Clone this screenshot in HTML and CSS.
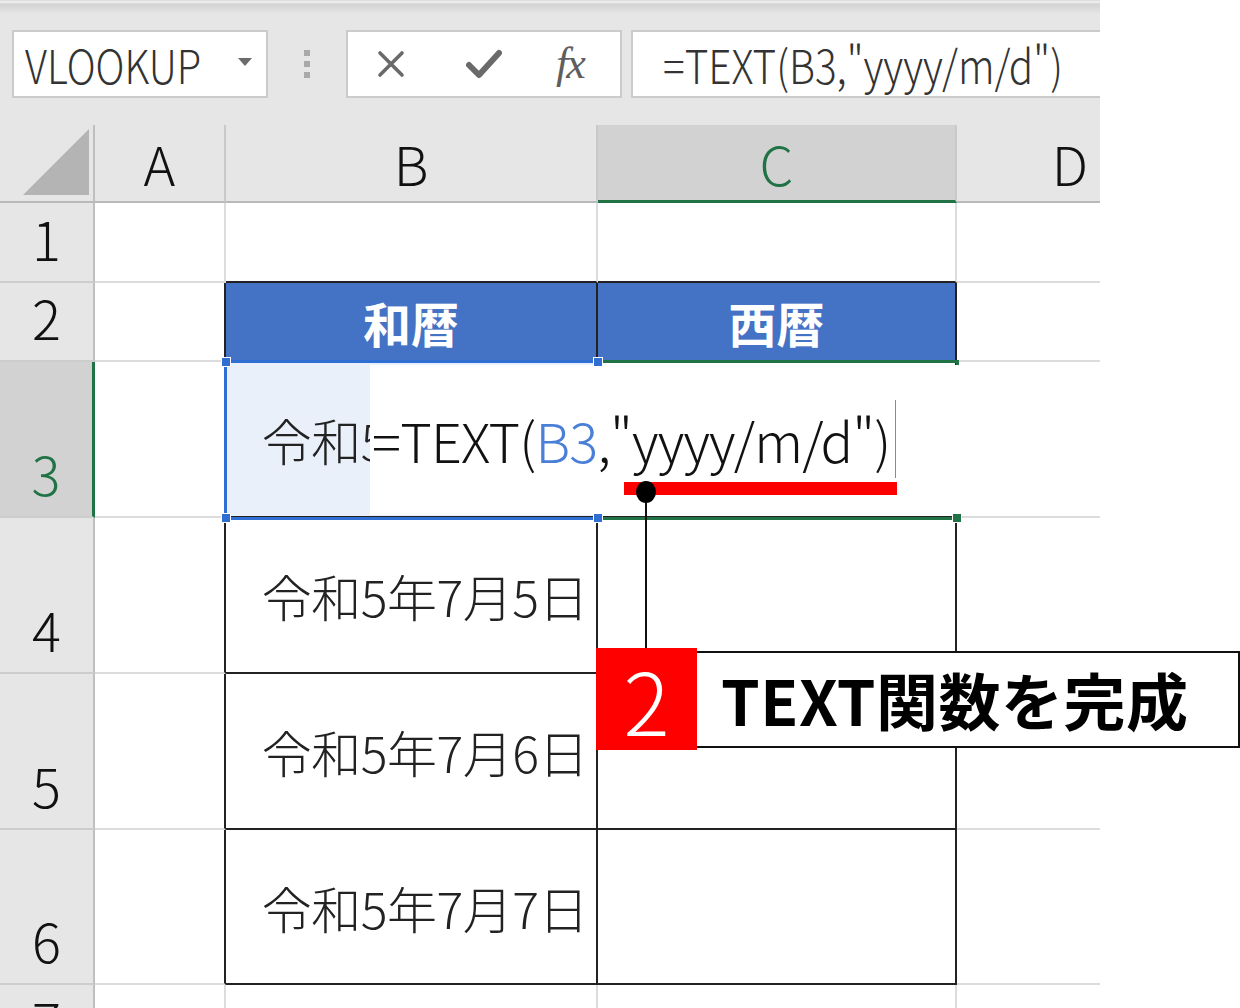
FILE: index.html
```html
<!DOCTYPE html>
<html lang="ja">

<head>
  <meta charset="UTF-8">
  <meta name="viewport" content="width=device-width, initial-scale=1.0">
  <title>TEXT関数</title>
  <link rel="stylesheet" href="styles.css">
</head>

<body>
  <div class="page">
    <div class="sheet">
      <div class="ribbon-edge"></div>
      <div class="formula-bar">
        <div class="name-box">
          <span class="narrow">VLOOKUP</span>
          <svg class="drop" width="14" height="8" viewBox="0 0 14 8"><path d="M0 0 H14 L7 8 Z" fill="#6b6b6b"/></svg>
        </div>
        <div class="grip"><i></i><i></i><i></i></div>
        <div class="fx-buttons">
          <svg class="btn-x" width="32" height="32" viewBox="0 0 32 32"><path d="M5 5 L27 27 M27 5 L5 27" stroke="#6a6a6a" stroke-width="3.6" stroke-linecap="round"/></svg>
          <svg class="btn-ok" width="36" height="30" viewBox="0 0 36 30"><path d="M3 16 L13 26 L33 4" stroke="#6a6a6a" stroke-width="6" fill="none" stroke-linecap="round" stroke-linejoin="round"/></svg>
          <span class="fx">fx</span>
        </div>
        <div class="formula-input"><span class="narrow">=TEXT(B3,"yyyy/m/d")</span></div>
      </div>

      <div class="grid">
        <!-- 列見出し -->
        <div class="corner">
          <svg width="66" height="66" viewBox="0 0 66 66"><path d="M66 0 V66 H0 Z" fill="#b4b4b4"/></svg>
        </div>
        <div class="ch">A</div>
        <div class="ch">B</div>
        <div class="ch sel">C</div>
        <div class="ch last">D</div>

        <!-- 1 -->
        <div class="rh">1</div>
        <div class="cell"></div>
        <div class="cell above"></div>
        <div class="cell above"></div>
        <div class="cell last"></div>

        <!-- 2 -->
        <div class="rh">2</div>
        <div class="cell left-of"></div>
        <div class="cell t head">和暦</div>
        <div class="cell t head">西暦</div>
        <div class="cell last"></div>

        <!-- 3 -->
        <div class="rh sel">3</div>
        <div class="cell left-of"></div>
        <div class="cell t date ref">令和5年7月4日</div>
        <div class="cell t"></div>
        <div class="cell last"></div>

        <!-- 4 -->
        <div class="rh">4</div>
        <div class="cell left-of"></div>
        <div class="cell t date">令和5年7月5日</div>
        <div class="cell t"></div>
        <div class="cell last"></div>

        <!-- 5 -->
        <div class="rh">5</div>
        <div class="cell left-of"></div>
        <div class="cell t date">令和5年7月6日</div>
        <div class="cell t"></div>
        <div class="cell last"></div>

        <!-- 6 -->
        <div class="rh">6</div>
        <div class="cell left-of"></div>
        <div class="cell t date">令和5年7月7日</div>
        <div class="cell t"></div>
        <div class="cell last"></div>

        <!-- 7 -->
        <div class="rh">7</div>
        <div class="cell"></div>
        <div class="cell"></div>
        <div class="cell"></div>
        <div class="cell last"></div>

        <!-- 選択枠と編集中の数式 -->
        <div class="range-sel"></div>
        <div class="active-sel"></div>
        <div class="edit-box">
          <span>=TEXT(<b class="ref-txt">B3</b>,"yyyy/m/d")</span>
          <i class="caret"></i>
        </div>
        <i class="handle h1"></i>
        <i class="handle h2"></i>
        <i class="handle h3"></i>
        <i class="handle h4"></i>
        <i class="handle fill"></i>

        <div class="underline"></div>
        <div class="pin-line"></div>
        <div class="pin-dot"></div>

        <div class="callout">
          <div class="num">2</div>
          <div class="label">TEXT関数を完成</div>
        </div>
      </div>
    </div>
  </div>
</body>

</html>
```

FILE: styles.css
```css
* {
  margin: 0;
  padding: 0;
  box-sizing: border-box;
}
body {
  background: #fff;
  overflow: hidden;
  font-family: "Noto Sans CJK JP", "Noto Sans", sans-serif;
  color: #222;
}
.page {
  width: 1240px;
  height: 1008px;
  overflow: hidden;
}
.sheet {
  width: 1100px;
}

/* 数式バー */
.ribbon-edge {
  height: 14px;
  background: linear-gradient(#d6d6d6 0, #f3f3f3 2px, #d2d2d2 4px, #e6e6e6 14px);
}
.formula-bar {
  height: 111px;
  background: #e6e6e6;
  display: flex;
  align-items: flex-start;
  padding: 16px 0 0 12px;
}
.narrow {
  display: inline-block;
  transform-origin: left center;
  white-space: nowrap;
  line-height: 1;
}
.name-box {
  width: 256px;
  height: 68px;
  background: #fff;
  border: 2px solid #cbcbcb;
  display: flex;
  align-items: center;
  justify-content: space-between;
  padding: 0 14px 0 11px;
  overflow: hidden;
}
.name-box .narrow {
  font-size: 46px;
  font-weight: 300;
  color: #333;
  transform: scaleX(0.865);
}
.drop {
  margin-bottom: 4px;
}
.grip {
  width: 78px;
  height: 68px;
  display: flex;
  flex-direction: column;
  align-items: center;
  justify-content: center;
  gap: 5px;
}
.grip i {
  width: 6px;
  height: 6px;
  background: #a9a9a9;
}
.fx-buttons {
  width: 276px;
  height: 68px;
  background: #fff;
  border: 2px solid #cbcbcb;
  display: flex;
  align-items: center;
  padding-left: 27px;
}
.btn-ok {
  margin-left: 59px;
}
.fx {
  margin-left: 54px;
  font-family: "Liberation Serif", serif;
  font-style: italic;
  font-size: 44px;
  line-height: 1;
  color: #5e5e5e;
  letter-spacing: -2px;
}
.formula-input {
  flex: 1;
  margin-left: 9px;
  height: 68px;
  background: #fff;
  border: 2px solid #cbcbcb;
  border-right: none;
  display: flex;
  align-items: center;
  padding-left: 30px;
  overflow: hidden;
}
.formula-input .narrow {
  font-size: 46px;
  font-weight: 300;
  color: #333;
  transform: scaleX(0.88);
}

/* シート */
.grid {
  position: relative;
  display: grid;
  grid-template-columns: 95px 131px 372px 359px 143px;
  grid-template-rows: 78px 80px 79px 156px 156px 156px 155px 80px;
  background: #fff;
}
.corner {
  background: #e6e6e6;
  border-right: 2px solid #bfbfbf;
  border-bottom: 2px solid #b9b9b9;
  display: flex;
  align-items: flex-end;
  justify-content: flex-end;
  padding: 0 4px 6px 0;
}
.ch {
  background: #e6e6e6;
  border-right: 2px solid #c9c9c9;
  border-bottom: 2px solid #b9b9b9;
  display: flex;
  align-items: center;
  justify-content: center;
  font-size: 54px;
  font-weight: 300;
  line-height: 1;
  color: #111;
}
.ch.sel {
  background: #d2d2d2;
  color: #217346;
  border-bottom: 3px solid #217346;
}
.ch.last {
  border-right: none;
  justify-content: flex-end;
  padding-right: 12px;
}
.rh {
  background: #e6e6e6;
  border-right: 2px solid #bfbfbf;
  border-bottom: 2px solid #cdcdcd;
  display: flex;
  align-items: flex-end;
  justify-content: center;
  padding-bottom: 16px;
  font-size: 54px;
  font-weight: 300;
  line-height: 1;
  color: #111;
}
.rh.sel {
  background: #d2d2d2;
  color: #217346;
  border-right: 3px solid #217346;
}
.cell {
  border-right: 2px solid #dcdcdc;
  border-bottom: 2px solid #dcdcdc;
}
.cell.last {
  border-right: none;
}
.cell.above {
  border-bottom-color: #222;
}
.cell.left-of {
  border-right-color: #222;
}
.cell.t {
  border-right-color: #222;
  border-bottom-color: #222;
}
.head {
  background: #4472c4;
  color: #fff;
  font-weight: bold;
  font-size: 48px;
  display: flex;
  align-items: center;
  justify-content: center;
  line-height: 1;
}
.date {
  display: flex;
  align-items: center;
  justify-content: flex-end;
  padding-right: 8px;
  font-size: 50px;
  font-weight: 300;
  letter-spacing: -0.5px;
  line-height: 1;
  color: #222;
  white-space: nowrap;
}
.ref {
  background: #eaf0fa;
}

/* 選択範囲 */
.range-sel {
  position: absolute;
  left: 224px;
  top: 235px;
  width: 376px;
  height: 160px;
  border: 3px solid #2f6fd3;
}
.active-sel {
  position: absolute;
  left: 598px;
  top: 235px;
  width: 361px;
  height: 160px;
  border: 3px solid #217346;
  border-left: none;
}
.edit-box {
  position: absolute;
  left: 370px;
  top: 240px;
  width: 592px;
  height: 150px;
  background: #fff;
  display: flex;
  align-items: center;
  padding-left: 2px;
  font-size: 54px;
  font-weight: 300;
  letter-spacing: -0.75px;
  line-height: 1;
  color: #111;
  white-space: nowrap;
}
.ref-txt {
  font-weight: 300;
  color: #4a7fd8;
}
.caret {
  position: absolute;
  left: 525px;
  top: 35px;
  width: 1px;
  height: 78px;
  background: #8a8a8a;
}
.handle {
  position: absolute;
  width: 10px;
  height: 10px;
  background: #2f6fd3;
  border: 1px solid #fff;
}
.h1 { left: 221px; top: 232px; }
.h2 { left: 593px; top: 232px; }
.h3 { left: 221px; top: 388px; }
.h4 { left: 593px; top: 388px; }
.handle.fill {
  left: 952px;
  top: 388px;
  background: #217346;
}

/* 注釈 */
.underline {
  position: absolute;
  left: 624px;
  top: 357px;
  width: 273px;
  height: 13px;
  background: #ff0000;
}
.pin-line {
  position: absolute;
  left: 645px;
  top: 367px;
  width: 2px;
  height: 158px;
  background: #111;
}
.pin-dot {
  position: absolute;
  left: 636px;
  top: 356px;
  width: 20px;
  height: 22px;
  border-radius: 50%;
  background: #000;
}
.callout {
  position: absolute;
  left: 596px;
  top: 523px;
  display: flex;
  align-items: center;
}
.num {
  width: 101px;
  height: 102px;
  background: #ff0000;
  color: #fff;
  font-weight: 300;
  font-size: 86px;
  line-height: 1;
  display: flex;
  align-items: center;
  justify-content: center;
}
.label {
  width: 543px;
  height: 97px;
  background: #fff;
  border: 2px solid #111;
  border-left: none;
  display: flex;
  align-items: center;
  padding-left: 24px;
  font-weight: bold;
  font-size: 62px;
  letter-spacing: 0.5px;
  line-height: 1;
  color: #000;
  white-space: nowrap;
}
```
